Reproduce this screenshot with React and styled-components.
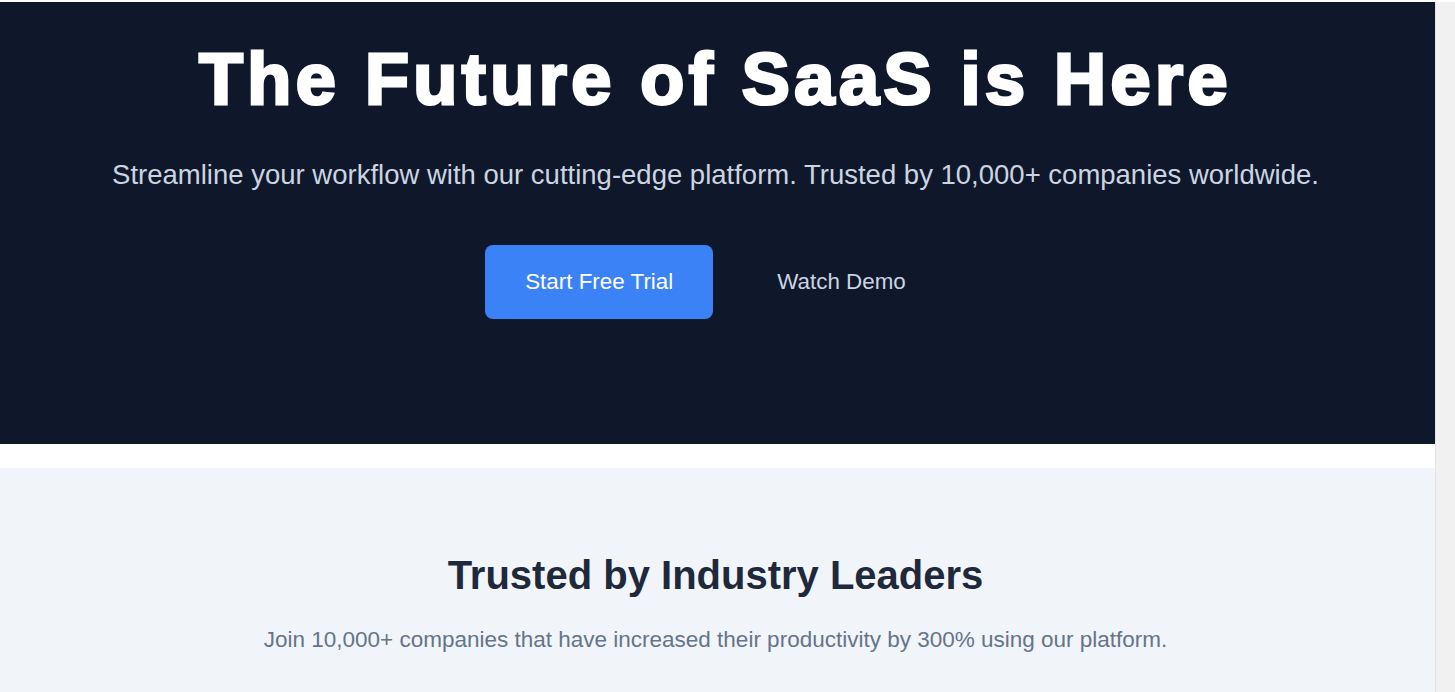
import React from "react";
import styled, { createGlobalStyle } from "styled-components";

const Global = createGlobalStyle`
  html, body {
    margin: 0;
    padding: 0;
    height: 100%;
    overflow: hidden;
    background: #ffffff;
  }
  body {
    font-family: "Liberation Sans", Arial, sans-serif;
  }
  * { box-sizing: border-box; }
`;

const Frame = styled.div`
  display: flex;
  height: 100vh;
  padding-top: 2px;
  background: #ffffff;
  overflow: hidden;
`;

const Main = styled.main`
  flex: 1;
  min-width: 0;
  display: flex;
  flex-direction: column;
  gap: 24px;
  background: #ffffff;
`;

const ScrollTrack = styled.div`
  width: 20px;
  flex-shrink: 0;
  background: #f1f1f1;
  border-left: 1px solid #e3e3e6;
`;

const Hero = styled.section`
  background: #0f172a;
  padding: 34px 36px 125px 32px;
  display: flex;
  flex-direction: column;
  align-items: center;
  text-align: center;
`;

const Title = styled.h1`
  margin: 0;
  font-family: "Liberation Sans", Arial, sans-serif;
  font-size: 72px;
  line-height: 86px;
  font-weight: 700;
  letter-spacing: 4.5px;
  color: #ffffff;
  -webkit-text-stroke: 3px #ffffff;
`;

const Lead = styled.p`
  margin: 33px 0 0;
  font-size: 27.5px;
  line-height: 40px;
  color: #cbd5e1;
`;

const Actions = styled.div`
  margin-top: 50px;
  display: flex;
  gap: 24px;
  justify-content: center;
`;

const Button = styled.button`
  font-family: "Liberation Sans", Arial, sans-serif;
  font-size: 22.4px;
  line-height: 26px;
  padding: 24px 40px;
  border: none;
  border-radius: 8px;
  cursor: pointer;
  background: ${(p) => (p.$primary ? "#3b82f6" : "transparent")};
  color: ${(p) => (p.$primary ? "#ffffff" : "#cbd5e1")};
`;

const Trust = styled.section`
  flex: 1;
  background: #f1f5f9;
  padding: 83px 36px 80px 32px;
  display: flex;
  flex-direction: column;
  align-items: center;
  text-align: center;
`;

const TrustTitle = styled.h2`
  margin: 0;
  font-size: 40px;
  line-height: 48px;
  font-weight: 700;
  color: #1e293b;
`;

const TrustText = styled.p`
  margin: 24px 0 0;
  font-size: 22.5px;
  line-height: 33.6px;
  color: #64748b;
`;

export default function App() {
  return (
    <>
      <Global />
      <Frame>
        <Main>
          <Hero>
            <Title>The Future of SaaS is Here</Title>
            <Lead>
              Streamline your workflow with our cutting-edge platform. Trusted by 10,000+ companies worldwide.
            </Lead>
            <Actions>
              <Button $primary>Start Free Trial</Button>
              <Button>Watch Demo</Button>
            </Actions>
          </Hero>
          <Trust>
            <TrustTitle>Trusted by Industry Leaders</TrustTitle>
            <TrustText>
              Join 10,000+ companies that have increased their productivity by 300% using our platform.
            </TrustText>
          </Trust>
        </Main>
        <ScrollTrack />
      </Frame>
    </>
  );
}
